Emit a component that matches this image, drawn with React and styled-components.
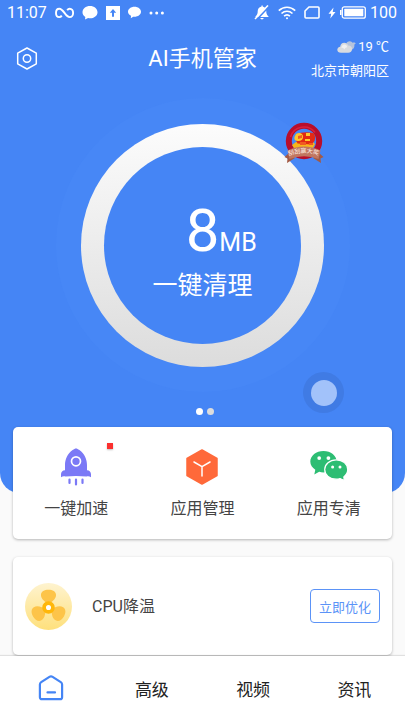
import React from "react";
import styled, { createGlobalStyle } from "styled-components";

const GlobalStyle = createGlobalStyle`
  :root {
    --blue: #4585f5;
    --page: #fafafa;
    --text-primary: #222;
    --text-secondary: #444;
  }

  * {
    box-sizing: border-box;
  }

  body {
    margin: 0;
    background: var(--page);
    font-family: Roboto, "Noto Sans CJK SC", sans-serif;
    color: var(--text-secondary);
  }

  button {
    border: none;
    padding: 0;
    background: none;
    font-family: inherit;
    color: inherit;
    cursor: pointer;
  }

  svg {
    display: block;
    flex: none;
  }
`;

const Page = styled.div`
  display: flex;
  flex-direction: column;
  min-height: 100vh;
`;

const Hero = styled.header`
  display: flex;
  flex-direction: column;
  padding-bottom: 78px;
  border-radius: 0 0 20px 20px;
  background: var(--blue);
  color: #fff;
`;

const StatusBar = styled.div`
  display: flex;
  justify-content: space-between;
  height: 25px;
  padding: 0 8px 0 7px;
  font-size: 16px;
  line-height: 25px;
`;

const StatusGroup = styled.div`
  display: flex;
  align-items: center;
  gap: 8px;
`;

const BatteryGroup = styled.div`
  display: flex;
  align-items: center;
  gap: 4px;
`;

const TopBar = styled.div`
  display: grid;
  grid-template-columns: 1fr auto 1fr;
  align-items: center;
  height: 67px;
  padding: 0 16px;
`;

const SettingsButton = styled.button`
  justify-self: start;
`;

const Title = styled.h1`
  margin: 0;
  font-size: 22px;
  font-weight: 400;
  line-height: 32px;
`;

const Weather = styled.div`
  display: grid;
  justify-items: end;
  gap: 4px;
  font-size: 13px;
  line-height: 20px;
`;

const Temperature = styled.div`
  display: flex;
  align-items: center;
  gap: 2px;
`;

const Halo = styled.div`
  position: relative;
  display: grid;
  place-items: center;
  align-self: center;
  width: 294px;
  height: 294px;
  margin-top: 6px;
  border-radius: 50%;
  background: #4787f6;
`;

const Ring = styled.button`
  width: 243px;
  height: 243px;
  padding: 23px;
  border-radius: 50%;
  background: linear-gradient(#fcfcfc, #dcdcdc);
`;

const Disc = styled.span`
  display: flex;
  flex-direction: column;
  align-items: center;
  justify-content: center;
  height: 100%;
  padding-top: 20px;
  border-radius: 50%;
  background: var(--blue);
  color: #fff;
`;

const Amount = styled.span`
  display: grid;
  grid-template-columns: 1fr auto 1fr;
  align-items: baseline;
  width: 100%;
  line-height: 50px;
`;

const Value = styled.span`
  grid-column: 2;
  font-size: 60px;
`;

const Unit = styled.span`
  font-size: 25px;
  text-align: left;
`;

const RingLabel = styled.span`
  font-size: 25px;
  line-height: 36px;
`;

const PrizeButton = styled.button`
  position: absolute;
  top: 24px;
  right: 26px;
`;

const Dots = styled.div`
  display: flex;
  align-self: center;
  gap: 4px;
  margin-top: 16px;
  padding-left: 4px;
`;

const Dot = styled.span`
  width: 7px;
  height: 7px;
  border-radius: 50%;
  background: ${(props) => (props.$active ? "#fff" : "#dcdcdc")};
`;

const AssistBall = styled.button`
  position: fixed;
  right: 61px;
  bottom: 307px;
  display: grid;
  place-items: center;
  width: 41px;
  height: 41px;
  border-radius: 50%;
  background: #407be4;

  &::before {
    content: "";
    width: 26px;
    height: 26px;
    border-radius: 50%;
    background: #a2c2fa;
  }
`;

const Content = styled.main`
  display: grid;
  gap: 18px;
  margin-top: -66px;
  padding: 0 13px 1px;
`;

const Card = styled.section`
  border-radius: 5px;
  background: #fff;
  box-shadow: 0 1px 3px rgba(0, 0, 0, 0.28);
`;

const ToolCard = styled(Card)`
  display: grid;
  grid-template-columns: repeat(3, 1fr);
`;

const Tool = styled.button`
  position: relative;
  display: flex;
  flex-direction: column;
  align-items: center;
  gap: 11px;
  padding: 21px 0 18px;
  font-size: 16px;
  line-height: 24px;
`;

const RedMark = styled.span`
  position: absolute;
  top: 16px;
  right: 26px;
  width: 6px;
  height: 6px;
  background: #fb302e;
  box-shadow: 0 1px 2px rgba(0, 0, 0, 0.25);
`;

const TipCard = styled(Card)`
  display: flex;
  align-items: center;
  gap: 20px;
  height: 98px;
  padding: 0 12px;
`;

const TipTitle = styled.h2`
  flex: 1;
  margin: 0;
  padding-top: 2px;
  font-size: 16px;
  font-weight: 400;
  line-height: 24px;
`;

const OutlineButton = styled.button`
  width: 70px;
  height: 34px;
  border: 1px solid #5b93f7;
  border-radius: 4px;
  color: #5b93f7;
  font-size: 13px;
`;

const TabBar = styled.nav`
  position: sticky;
  bottom: 0;
  display: grid;
  grid-template-columns: repeat(4, 1fr);
  height: 64px;
  margin-top: auto;
  background: #fff;
  box-shadow: 0 -1px 1px rgba(0, 0, 0, 0.1);
`;

const Tab = styled.a`
  display: flex;
  align-items: center;
  justify-content: center;
  color: var(--text-primary);
  font-size: 17px;
  text-decoration: none;
`;

function StatusIcons() {
  return (
    <StatusGroup>
      <span>11:07</span>
      <svg width="19" height="12" viewBox="0 0 19 12" fill="none" stroke="#fff" strokeWidth="1.9">
        <path d="M12.2 3.2C13 2 14 1.7 14.7 1.7c2 0 3.4 1.9 3.4 4.2s-1.4 4.2-3.4 4.2c-4.4 0-6-8.4-10.4-8.4C2.3 1.7 1 3.6 1 5.9s1.3 4.2 3.3 4.2c.9 0 1.8-.5 2.5-1.5" />
      </svg>
      <svg width="16" height="15" viewBox="0 0 16 15" fill="#fff">
        <path d="M8 1c4.2 0 7.5 2.7 7.5 6.2S12.2 13.3 8 13.3c-.7 0-1.3 0-1.9-.2L3 14.4l.3-2.5C1.6 10.8.5 9.1.5 7.2.5 3.700 3.800 1 8 1z" />
      </svg>
      <svg width="14" height="14" viewBox="0 0 14 14">
        <path fill="#fff" d="M0 0h14v14H0z" />
        <path fill="#4585f5" d="M7 3l3.200 3.800H8V10.800H6V6.800H3.800z" />
      </svg>
      <svg width="13" height="13" viewBox="0 0 13 13" fill="#fff">
        <path d="M6.5.8c3.600 0 6.500 2.200 6.500 5s-2.900 5-6.500 5l-1.300-.1-2.400 1.500.2-2.400C1.200 8.900 0 7.500 0 5.800c0-2.800 2.900-5 6.500-5z" />
      </svg>
      <svg width="16" height="4" viewBox="0 0 16 4" fill="#fff">
        <circle cx="2" cy="2" r="1.5" />
        <circle cx="7.7" cy="2" r="1.5" />
        <circle cx="13.4" cy="2" r="1.5" />
      </svg>
    </StatusGroup>
  );
}

function SystemIcons() {
  return (
    <StatusGroup>
      <svg width="16" height="15" viewBox="0 0 16 15">
        <path
          fill="#fff"
          d="M7.5.5h1.2v1c2.5.6 3.6 2.6 3.6 4.8 0 2.4.4 3.5 2.2 5.2v.6H1.5v-.6C3.3 9.8 3.7 8.7 3.7 6.3c0-2.2 1.2-4.2 3.8-4.8zM6.2 13h3.6c-.3.9-1 1.4-1.8 1.4S6.5 13.9 6.2 13z"
        />
        <path stroke="#4585f5" strokeWidth="1.6" d="M2.5 14.8L15.5 1" />
        <path stroke="#fff" strokeWidth="1.5" d="M1 14L14 .4" />
      </svg>
      <svg width="18" height="14" viewBox="0 0 18 14" fill="none" stroke="#fff" strokeWidth="1.7">
        <path d="M.8 4.6c4.8-4.5 11.6-4.5 16.4 0M3.5 7.5c3.2-3 7.8-3 11 0M6.1 10.2c1.7-1.6 4.1-1.6 5.8 0" />
        <circle cx="9" cy="12.2" r="1" fill="#fff" stroke="none" />
      </svg>
      <svg width="16" height="13" viewBox="0 0 16 13" fill="none" stroke="#fff" strokeWidth="1.6">
        <path d="M5 1h9c.7 0 1 .3 1 1v9c0 .7-.3 1-1 1H2c-.7 0-1-.3-1-1V5z" />
      </svg>
      <BatteryGroup>
        <svg width="8" height="12" viewBox="0 0 8 12" fill="#fff">
          <path d="M5.5.5L.5 6.8h2.7L2.3 11.5l5.2-6.4H4.7z" />
        </svg>
        <svg width="26" height="13" viewBox="0 0 26 13" fill="#fff">
          <path d="M0 4h1.5v5H0z" />
          <rect x="2.3" y=".8" width="23" height="11.4" rx="2" fill="none" stroke="#fff" strokeWidth="1.3" />
          <rect x="4.3" y="2.8" width="19" height="7.4" rx=".5" />
        </svg>
        <span>100</span>
      </BatteryGroup>
    </StatusGroup>
  );
}

function SettingsIcon() {
  return (
    <svg width="22" height="24" viewBox="0 0 22 24" fill="none" stroke="#fff" strokeWidth="1.5" strokeLinejoin="round">
      <path d="M11 1l9.300 5.200v10.600L11 22l-9.300-5.200V6.200z" />
      <circle cx="11" cy="11.5" r="3.7" />
    </svg>
  );
}

function CloudIcon() {
  return (
    <svg width="19" height="14" viewBox="0 0 19 14">
      <path fill="#b5c3dc" d="M9 7c-.6-3 1-5.5 3.5-5.7 1.5-.2 2.5.6 3 1.5 1.5-.6 3 0 3.4 1-1 0-1.4.5-1.5 1.2.3 2.5-1 4.5-3.4 5z" />
      <path fill="#d9dbdf" d="M4 12.8c-2.3 0-3.7-1.3-3.7-3 0-1.6 1.2-2.8 2.9-3C3.500 4.300 5 2.800 7.200 2.800c2 0 3.300 1 3.900 2.700 2.300-.1 4 1.300 4 3.500 0 2.300-1.600 3.800-4 3.800z" />
      <path fill="#f1f1f2" d="M4.4 7.8c.2-2 1.3-3.3 3-3.3s2.700 1.200 2.800 2.800c-1.700.2-2.400 1-2.700 2.200-.6-1.100-1.500-1.700-3.100-1.700z" />
    </svg>
  );
}

function PrizeBadge() {
  return (
    <svg width="40" height="42" viewBox="0 0 40 42">
      <circle cx="20" cy="19" r="15.2" fill="none" stroke="#b80e2b" strokeWidth="6" />
      <path d="M6.5 15A14 14 0 0 1 31 10.5" fill="none" stroke="#d8213b" strokeWidth="1.6" />
      <path fill="#f7b51b" d="M8 23l4-3h17l2 2-2 4H10z" />
      <path fill="#e32a13" d="M12 12.5c4-2.500 12-3 17-1.500 2 1 2.500 5 1.500 8l-3 3.500-14-1-2-4z" />
      <path fill="#ffc72c" d="M12 12c3-2 7-1 7 2.500s-2 4.500-5 4.500-4-1.500-3.500-4zM22 11h4v3h-4zM21 17h5v2h-5z" />
      <path fill="#f15a22" d="M14 14l4-1v3l-4 1zM16 20h6v3h-6zM25 21h4v2h-4z" />
      <path fill="#a35a45" d="M5 31L.5 35l3 1.500-.5 4.500 8-5zM35 31l4.500 4-3 1.500.5 4.500-8-5z" />
      <path fill="#c17660" d="M3.500 28.500Q20 20.500 36.500 28.500L34.500 37Q20 31.500 5.500 37z" />
      <path id="ribbon" fill="none" d="M5 34Q20 27.500 36 34" />
      <text fill="#fff1e8" fontSize="6">
        <textPath href="#ribbon">刮刮赢大奖</textPath>
      </text>
    </svg>
  );
}

function RocketIcon() {
  return (
    <svg width="32" height="38" viewBox="0 0 32 38">
      <path
        fill="#7b79f6"
        d="M16 .4c1 0 2 .5 3.400 1.600C24.800 6 27 11.500 27 17v5.300c2.500 0 4 1.700 4 4v3c-1.500-1.200-3-1.300-4.500-.8-7-.7-14-.7-21 0-1.500-.5-3-.4-4.500.8v-3c0-2.300 1.500-4 4-4V17C5 11.500 7.200 6 12.600 2 14 .9 15 .4 16 .4z"
      />
      <circle cx="16" cy="13.300" r="4.500" fill="none" stroke="#fff" strokeWidth="1.7" />
      <path stroke="#7b79f6" strokeWidth="2.2" strokeLinecap="round" d="M9.500 31.500v3.500M16 31.500v5M22.500 31.500v3.500" />
    </svg>
  );
}

function CubeIcon() {
  return (
    <svg width="32" height="38" viewBox="0 0 32 38">
      <path fill="#ff693a" stroke="#ff693a" strokeWidth="1.5" strokeLinejoin="round" d="M16 2l15 8.5v17L16 36 1 27.500v-17z" />
      <path fill="none" stroke="#fff" strokeWidth="1.5" strokeLinecap="round" strokeLinejoin="round" d="M8 14l8 4.700L24 14M16 18.700V28" />
    </svg>
  );
}

function ChatIcon() {
  return (
    <svg width="38" height="38" viewBox="0 0 38 38">
      <path fill="#2dbd73" d="M13.500 2.900C20.800 2.900 26.700 7.500 26.700 13.600S20.800 24.400 13.500 24.400c-1.500 0-3-.2-4.300-.6L4.300 26.500l1-4.700C2.300 19.900.3 17 .3 13.600.3 7.500 6.200 2.900 13.500 2.900z" />
      <path fill="#2dbd73" stroke="#fff" strokeWidth="1.2" d="M26.200 11.800c6.500 0 11.500 4.200 11.500 9.800 0 3-1.500 5.500-3.900 7.300l.6 3.700-4.300-2c-1.200.4-2.600.6-3.900.6-6.500 0-11.500-4.200-11.500-9.600s5-9.800 11.500-9.800z" />
      <g fill="#fff">
        <circle cx="9.200" cy="10.100" r="1.9" />
        <circle cx="18.400" cy="10.100" r="1.9" />
        <circle cx="22.600" cy="18.900" r="1.5" />
        <circle cx="30" cy="18.900" r="1.5" />
      </g>
    </svg>
  );
}

function FanIcon() {
  const blade = "M24 22c-2.600-2.600-7.700-5-7.700-9.800 0-3.500 3.500-5.400 7.700-5.400s7.700 1.900 7.700 5.400C31.700 17 26.600 19.400 24 22z";
  return (
    <svg width="47" height="47" viewBox="0 0 48 48">
      <defs>
        <linearGradient id="fanDisc" x1="0" y1="0" x2="0" y2="1">
          <stop offset="0" stopColor="#fef3cf" />
          <stop offset="1" stopColor="#fee07c" />
        </linearGradient>
      </defs>
      <circle cx="24" cy="24" r="24" fill="url(#fanDisc)" />
      <g fill="#fdc449">
        <path d={blade} />
        <path d={blade} transform="rotate(120 24 25)" />
        <path d={blade} transform="rotate(240 24 25)" />
      </g>
      <circle cx="24" cy="25" r="4.5" fill="#fff" stroke="#ffb70a" strokeWidth="3.8" />
    </svg>
  );
}

function HomeIcon() {
  return (
    <svg width="26" height="26" viewBox="0 0 26 26" fill="none" stroke="#4585f5" strokeWidth="2.2" strokeLinecap="round" strokeLinejoin="round">
      <path d="M11.400 1.900c1-.6 2.200-.6 3.200 0l8.200 5.300c.9.600 1.300 1.200 1.300 2.300v12.700c0 1.200-.8 2-2 2H3.900c-1.200 0-2-.8-2-2V9.500c0-1.100.4-1.700 1.300-2.300z" />
      <path d="M9.500 17.400h7.500" />
    </svg>
  );
}

const tools = [
  { label: "一键加速", icon: <RocketIcon />, marked: true },
  { label: "应用管理", icon: <CubeIcon /> },
  { label: "应用专清", icon: <ChatIcon /> },
];

const tabs = [
  { id: "advanced", label: "高级" },
  { id: "video", label: "视频" },
  { id: "news", label: "资讯" },
];

export default function App() {
  return (
    <Page>
      <GlobalStyle />
      <Hero>
        <StatusBar>
          <StatusIcons />
          <SystemIcons />
        </StatusBar>
        <TopBar>
          <SettingsButton aria-label="设置">
            <SettingsIcon />
          </SettingsButton>
          <Title>AI手机管家</Title>
          <Weather>
            <Temperature>
              <CloudIcon />
              <span>19 ℃</span>
            </Temperature>
            <span>北京市朝阳区</span>
          </Weather>
        </TopBar>
        <Halo>
          <Ring>
            <Disc>
              <Amount>
                <Value>8</Value>
                <Unit>MB</Unit>
              </Amount>
              <RingLabel>一键清理</RingLabel>
            </Disc>
          </Ring>
          <PrizeButton aria-label="抽奖">
            <PrizeBadge />
          </PrizeButton>
        </Halo>
        <Dots>
          <Dot $active />
          <Dot />
        </Dots>
      </Hero>
      <Content>
        <ToolCard>
          {tools.map((tool) => (
            <Tool key={tool.label}>
              {tool.icon}
              <span>{tool.label}</span>
              {tool.marked && <RedMark />}
            </Tool>
          ))}
        </ToolCard>
        <TipCard>
          <FanIcon />
          <TipTitle>CPU降温</TipTitle>
          <OutlineButton>立即优化</OutlineButton>
        </TipCard>
      </Content>
      <TabBar>
        <Tab href="#home" aria-label="首页">
          <HomeIcon />
        </Tab>
        {tabs.map((tab) => (
          <Tab key={tab.id} href={`#${tab.id}`}>
            {tab.label}
          </Tab>
        ))}
      </TabBar>
      <AssistBall aria-label="悬浮球" />
    </Page>
  );
}
